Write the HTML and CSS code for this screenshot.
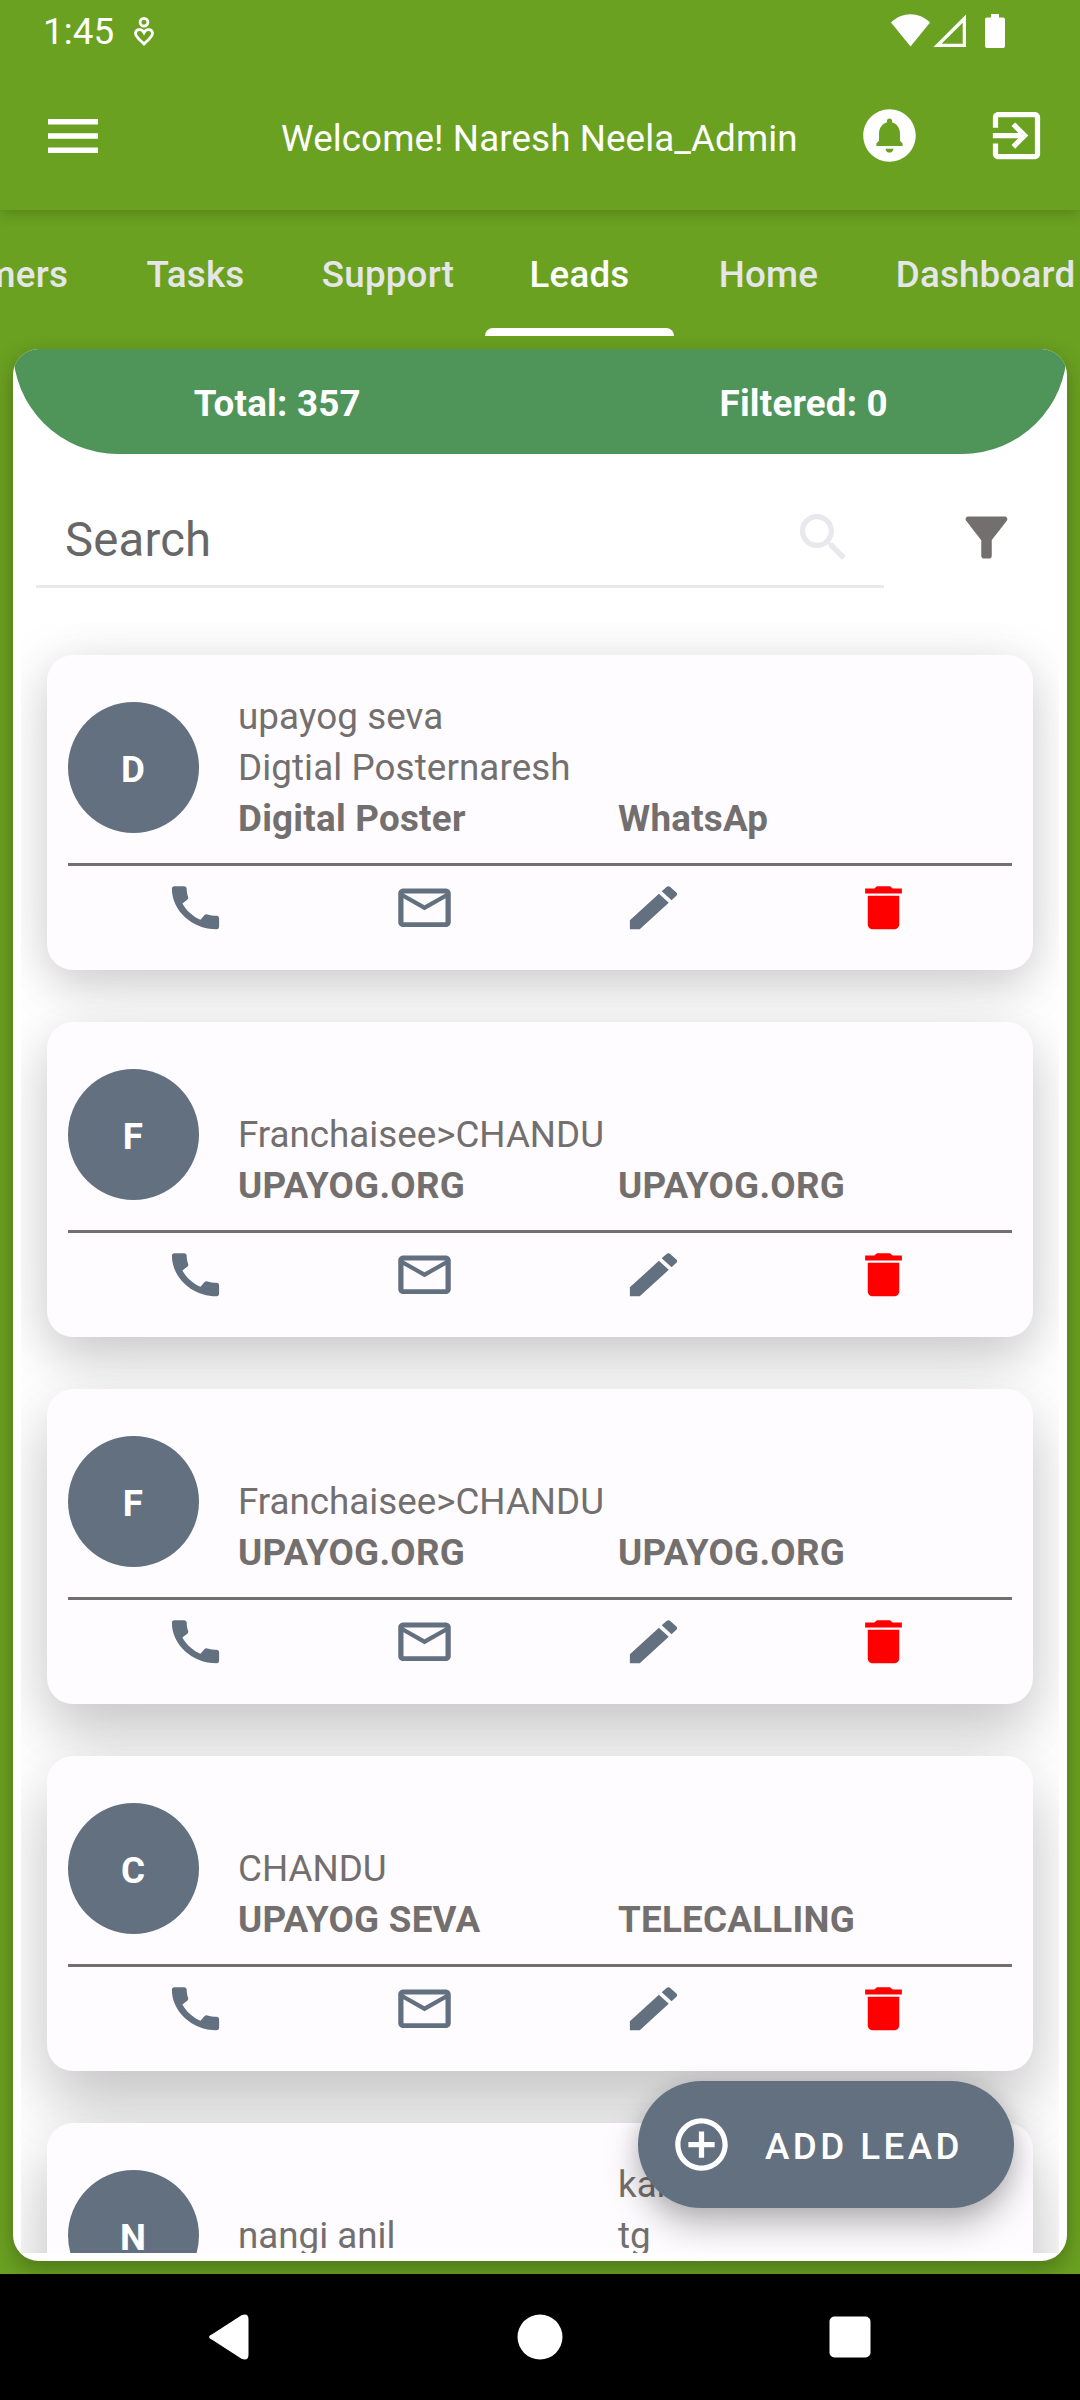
FILE: index.html
```html
<!DOCTYPE html>
<html lang="en">
<head>
<meta charset="utf-8">
<title>Leads</title>
<link rel="stylesheet" href="styles.css">
</head>
<body>
<svg class="sprite" width="0" height="0" aria-hidden="true">
  <symbol id="call" viewBox="0 0 24 24" preserveAspectRatio="none"><path d="M20.01 15.38c-1.23 0-2.42-.2-3.53-.56a.977.977 0 0 0-1.01.24l-1.57 1.97c-2.83-1.35-5.48-3.9-6.89-6.83l1.95-1.66c.27-.28.35-.67.24-1.02-.37-1.11-.56-2.3-.56-3.53 0-.54-.45-.99-.99-.99H4.19C3.65 3 3 3.24 3 3.99 3 13.28 10.73 21 20.01 21c.71 0 .99-.63.99-1.18v-3.45c0-.54-.45-.99-.99-.99z"/></symbol>
  <symbol id="mail" viewBox="0 0 24 24" preserveAspectRatio="none"><path d="M22 6c0-1.1-.9-2-2-2H4c-1.1 0-2 .9-2 2v12c0 1.100.9 2 2 2h16c1.100 0 2-.9 2-2V6zm-2 0l-8 5-8-5h16zm0 12H4V8l8 5 8-5v10z"/></symbol>
  <symbol id="edit" viewBox="0 0 24 24" preserveAspectRatio="none"><path d="M3 17.250V21h3.750L17.810 9.940l-3.750-3.750L3 17.250zM20.710 7.040c.39-.39.39-1.020 0-1.410l-2.340-2.340c-.39-.39-1.020-.39-1.410 0l-1.830 1.830 3.750 3.750 1.830-1.830z"/></symbol>
  <symbol id="trash" viewBox="0 0 24 24" preserveAspectRatio="none"><path d="M6 19c0 1.100.9 2 2 2h8c1.100 0 2-.9 2-2V7H6v12zM19 4h-3.500l-1-1h-5l-1 1H5v2h14V4z"/></symbol>
</svg>
<div class="screen">
  <div class="status">
    <span class="clock">1:45</span>
    <svg class="heart" viewBox="0 0 20 29"><circle cx="10" cy="5.300" r="3.900"/><path d="M10 15.600C7.500 10.800 1.500 12.300 1.500 16.600c0 3.200 4 6 8.500 10.400 4.500-4.400 8.500-7.200 8.500-10.400 0-4.300-6-5.800-8.500-1z"/></svg>
    <svg class="signals" viewBox="0 0 114 35"><path d="M0 8.500C11-2.500 28-2.500 39 8.500L19.500 32.500z"/><path fill-rule="evenodd" d="M75 .5V33H42.500zM71.700 8.800L50.500 29.700h21.200z"/><path d="M100 0h8v3.500h4q2 0 2 2V32q0 2-2 2H96q-2 0-2-2V5.500q0-2 2-2h4z"/></svg>
  </div>
  <header class="appbar">
    <svg class="menu" viewBox="0 0 50 34"><path d="M0 0h50v5.600H0zM0 14.200h50v5.600H0zM0 28.400h50V34H0z"/></svg>
    <h1 class="welcome">Welcome! Naresh Neela_Admin</h1>
    <svg class="bell" viewBox="0 0 24 24"><path d="M12 2C6.480 2 2 6.480 2 12s4.480 10 10 10 10-4.480 10-10S17.520 2 12 2zm0 16.500c-.83 0-1.500-.67-1.500-1.500h3c0 .83-.67 1.500-1.500 1.500zm5-2.500H7v-1l1-1v-2.610C8 9.270 9.030 7.470 11 7v-.5c0-.57.43-1 1-1s1 .43 1 1V7c1.970.47 3 2.280 3 4.390V14l1 1v1z"/></svg>
    <svg class="exit" viewBox="0 0 24 24"><path d="M10.090 15.590L11.500 17l5-5-5-5-1.410 1.410L12.670 11H3v2h9.670l-2.580 2.590zM19 3H5c-1.110 0-2 .9-2 2v4h2V5h14v14H5v-4H3v4c0 1.100.89 2 2 2h14c1.100 0 2-.9 2-2V5c0-1.100-.9-2-2-2z"/></svg>
  </header>
  <nav class="tabs">
    <span class="tab tab-first">Customers</span>
    <span class="tab">Tasks</span>
    <span class="tab tab-support">Support</span>
    <span class="tab active">Leads</span>
    <span class="tab">Home</span>
    <span class="tab tab-dash">Dashboard</span>
  </nav>
  <main class="stage">
    <section class="panel">
      <div class="totals"><span>Total: 357</span><span>Filtered: 0</span></div>
      <div class="tools">
        <div class="search">
          <span>Search</span>
          <svg class="icon" viewBox="0 0 24 24"><path d="M15.500 14h-.79l-.28-.27C15.410 12.590 16 11.110 16 9.500 16 5.910 13.090 3 9.500 3S3 5.910 3 9.500 5.910 16 9.500 16c1.610 0 3.090-.59 4.230-1.570l.27.28v.79l5 4.990L20.490 19l-4.990-5zm-6 0C7.010 14 5 11.990 5 9.500S7.010 5 9.500 5 14 7.010 14 9.500 11.990 14 9.500 14z"/></svg>
        </div>
        <svg class="icon funnel" viewBox="0 0 24 24"><path d="M4.250 5.610C6.270 8.200 10 13 10 13v6c0 .55.45 1 1 1h2c.55 0 1-.45 1-1v-6s3.720-4.800 5.740-7.390c.51-.66.04-1.610-.79-1.610H5.040c-.83 0-1.300.95-.79 1.610z"/></svg>
      </div>
      <div class="list">
        <article class="card depth-1">
          <div class="lead">
            <span class="avatar">D</span>
            <div class="details"><span>upayog seva</span><span></span><span>Digtial Posternaresh</span><span></span><b>Digital Poster</b><b>WhatsAp</b></div>
          </div>
          <div class="actions"><svg><use href="#call"/></svg><svg><use href="#mail"/></svg><svg><use href="#edit"/></svg><svg class="delete"><use href="#trash"/></svg></div>
        </article>
        <article class="card depth-2">
          <div class="lead">
            <span class="avatar">F</span>
            <div class="details"><span></span><span></span><span class="tight">Franchaisee&gt;CHANDU</span><span></span><b>UPAYOG.ORG</b><b>UPAYOG.ORG</b></div>
          </div>
          <div class="actions"><svg><use href="#call"/></svg><svg><use href="#mail"/></svg><svg><use href="#edit"/></svg><svg class="delete"><use href="#trash"/></svg></div>
        </article>
        <article class="card depth-3">
          <div class="lead">
            <span class="avatar">F</span>
            <div class="details"><span></span><span></span><span class="tight">Franchaisee&gt;CHANDU</span><span></span><b>UPAYOG.ORG</b><b>UPAYOG.ORG</b></div>
          </div>
          <div class="actions"><svg><use href="#call"/></svg><svg><use href="#mail"/></svg><svg><use href="#edit"/></svg><svg class="delete"><use href="#trash"/></svg></div>
        </article>
        <article class="card depth-4">
          <div class="lead">
            <span class="avatar">C</span>
            <div class="details"><span></span><span></span><span class="tight">CHANDU</span><span></span><b>UPAYOG SEVA</b><b>TELECALLING</b></div>
          </div>
          <div class="actions"><svg><use href="#call"/></svg><svg><use href="#mail"/></svg><svg><use href="#edit"/></svg><svg class="delete"><use href="#trash"/></svg></div>
        </article>
        <article class="card depth-5">
          <div class="lead">
            <span class="avatar">N</span>
            <div class="details"><span></span><span>kar</span><span class="tight">nangi anil</span><span>tg</span></div>
          </div>
        </article>
      </div>
    </section>
    <div class="fab">
      <svg class="icon" viewBox="0 0 24 24"><path d="M13 7h-2v4H7v2h4v4h2v-4h4v-2h-4V7zm-1-5C6.480 2 2 6.480 2 12s4.480 10 10 10 10-4.480 10-10S17.520 2 12 2zm0 18c-4.410 0-8-3.590-8-8s3.590-8 8-8 8 3.590 8 8-3.590 8-8 8z"/></svg>
      <span>ADD LEAD</span>
    </div>
  </main>
  <footer class="navbar">
    <svg viewBox="0 0 46 46"><path d="M5 20L34 1.300Q41 -1.500 41 5.500V40.500Q41 47.500 34 44.700L5 26Q-2 23 5 20z" transform="translate(.5 0)"/></svg>
    <svg viewBox="0 0 46 46"><circle cx="23" cy="23" r="22.500"/></svg>
    <svg viewBox="0 0 46 46"><rect x="2.500" y="2.500" width="41" height="41" rx="5"/></svg>
  </footer>
</div>
</body>
</html>
```
FILE: styles.css
```css
* { box-sizing: border-box; }
body {
  margin: 0;
  font-family: Roboto, sans-serif;
  font-size: 36.75px;
  letter-spacing: .1px;
}
.sprite { display: block; position: absolute; }
.screen {
  width: 1080px;
  height: 2400px;
  display: flex;
  flex-direction: column;
  overflow: hidden;
  background: #6aa121;
}
svg { display: block; flex: none; }
.icon { width: 63px; height: 63px; }

.status {
  position: relative;
  z-index: 2;
  height: 63px;
  flex: none;
  display: flex;
  align-items: flex-start;
  padding: 14px 75px 0 43px;
  background: #6aa121;
  color: #fff;
}
.clock { line-height: 35px; width: 91px; }
.heart { width: 20px; height: 29px; margin-top: 3px; fill: none; stroke: #fff; stroke-width: 2.800; }
.signals { width: 114px; height: 35px; margin-left: auto; fill: #fff; }

.appbar {
  position: relative;
  z-index: 1;
  height: 147px;
  flex: none;
  display: flex;
  align-items: center;
  padding: 0 32px 2px 48px;
  background: #6aa121;
  box-shadow: 0 2px 14px rgba(0, 0, 0, .22);
  fill: #fff;
  color: #fff;
}
.menu { width: 50px; height: 34px; }
.welcome { margin: 0 0 0 183px; font-size: 36.75px; font-weight: 400; line-height: 44px; white-space: nowrap; padding-top: 7px; }
.bell { width: 63px; height: 63px; margin-left: auto; margin-right: 64px; }
.exit { width: 63px; height: 63px; }

.tabs {
  height: 126px;
  flex: none;
  display: flex;
  color: #e6e6e9;
  font-weight: 500;
  letter-spacing: .2px;
}
.tab {
  width: 189px;
  flex: none;
  display: flex;
  align-items: center;
  justify-content: center;
  padding-top: 3px;
}
.tab-first { width: 232px; margin-left: -131px; justify-content: flex-end; padding-right: 33px; }
.tab-support { width: 195px; padding-left: 1px; }
.tab-dash { width: 244px; padding-left: 1px; }
.active {
  position: relative;
  color: #fff;
}
.active::after {
  content: "";
  position: absolute;
  left: 0;
  right: 0;
  bottom: 0;
  height: 8px;
  border-radius: 8px 8px 0 0;
  background: #fff;
}

.stage {
  position: relative;
  height: 1938px;
  flex: none;
  padding: 13px 13px;
  overflow: hidden;
}
.panel {
  height: 1912px;
  border-radius: 26px;
  background: #fff;
  overflow: hidden;
  display: flex;
  flex-direction: column;
  box-shadow: 0 8px 22px rgba(0, 0, 0, .28);
}
.totals {
  height: 105px;
  flex: none;
  display: grid;
  grid-template-columns: 1fr 1fr;
  align-items: center;
  justify-items: center;
  border-radius: 0 0 105px 105px;
  background: #4f9459;
  color: #fff;
  font-weight: 700;
  letter-spacing: .2px;
  padding: 4px 0 0 1px;
}
.tools {
  height: 169px;
  flex: none;
  display: flex;
  padding: 29px 49px 0 23px;
}
.search {
  width: 848px;
  height: 105px;
  display: flex;
  justify-content: space-between;
  align-items: center;
  padding: 6px 29px 0 29px;
  border-bottom: 3px solid #e8e8ed;
  font-size: 47.25px;
  letter-spacing: .2px;
  color: #676767;
}
.search span { padding-top: 6px; }
.search .icon { fill: #e8e8ed; }
.funnel { margin: 23px 0 0 auto; fill: #736f6e; }

.list {
  height: 1630px;
  flex: none;
  margin: 0 8px;
  padding: 32px 26px 0;
  overflow: hidden;
  display: flex;
  flex-direction: column;
  gap: 52px;
}
.card {
  height: 315px;
  flex: none;
  padding: 0 21px;
  border-radius: 26px;
  background: #fefcff;
  color: #736f6e;
  fill: #627080;
}
.depth-1 { box-shadow: 0 14px 40px rgba(0, 0, 0, .14), 0 10px 70px rgba(0, 0, 0, .09); }
.depth-2 { box-shadow: 0 20px 46px rgba(0, 0, 0, .14), 0 14px 72px rgba(0, 0, 0, .1); }
.depth-3 { box-shadow: 0 28px 54px rgba(0, 0, 0, .15), 0 20px 76px rgba(0, 0, 0, .1); }
.depth-4 { box-shadow: 0 34px 60px rgba(0, 0, 0, .15), 0 24px 80px rgba(0, 0, 0, .11); }
.depth-5 { box-shadow: 0 36px 60px rgba(0, 0, 0, .16), 0 24px 80px rgba(0, 0, 0, .12); }
.lead {
  height: 211px;
  display: flex;
  border-bottom: 3px solid #736f6e;
}
.avatar {
  width: 131px;
  height: 131px;
  margin: 47px 39px 0 0;
  display: flex;
  align-items: center;
  justify-content: center;
  border-radius: 50%;
  background: #627080;
  color: #fff;
  font-weight: 700;
  padding: 3px 1px 0 0;
}
.details {
  display: grid;
  grid-template-columns: 380px 380px;
  grid-auto-rows: 51px;
  padding-top: 36px;
  line-height: 51px;
  white-space: nowrap;
}
.details b { letter-spacing: .25px; }
.details .tight { letter-spacing: 0; }
.actions {
  display: grid;
  grid-template-columns: repeat(4, 229px);
  justify-items: center;
  padding: 13px 13px 0;
}
.actions svg { width: 63px; height: 57.5px; }
.actions .delete { fill: #f00; margin-left: 1px; }

.fab {
  position: absolute;
  left: 638px;
  top: 1745px;
  width: 376px;
  height: 127px;
  display: flex;
  align-items: center;
  gap: 32px;
  padding-left: 32px;
  border-radius: 64px;
  background: #627080;
  box-shadow: 0 18px 34px rgba(0, 0, 0, .26), 0 2px 20px rgba(0, 0, 0, .1);
  color: #fff;
  fill: #fff;
  font-weight: 500;
  letter-spacing: 3.450px;
}
.fab span { padding-top: 3px; }

.navbar {
  flex: 1;
  display: flex;
  align-items: center;
  justify-content: center;
  gap: 264px;
  padding-right: 1px;
  background: #000;
  fill: #fff;
}
.navbar svg { width: 46px; height: 46px; }
```
